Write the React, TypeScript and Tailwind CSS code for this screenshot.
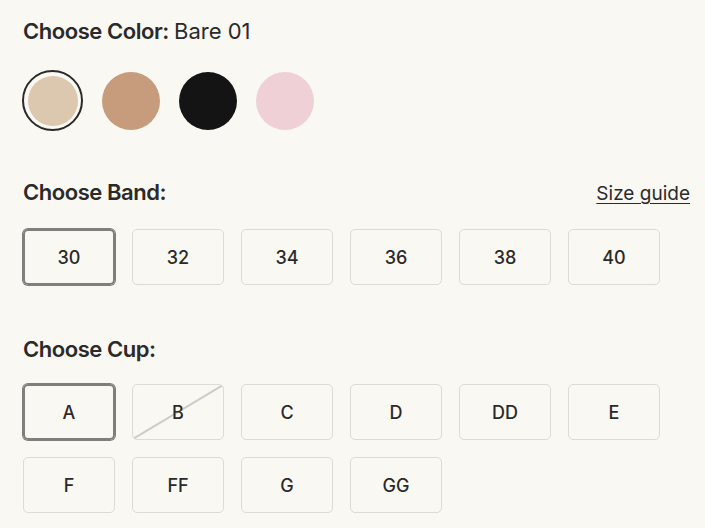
import React from 'react';

const colors = [
  { name: 'Bare 01', hex: '#dcc7af' },
  { name: 'Bare 02', hex: '#c69c7d' },
  { name: 'Black', hex: '#141414' },
  { name: 'Pink', hex: '#efd0d6' },
];

const bands = ['30', '32', '34', '36', '38', '40'];
const cups = ['A', 'B', 'C', 'D', 'DD', 'E', 'F', 'FF', 'G', 'GG'];
const soldOut = ['B'];

const font = { fontFamily: 'Inter, "Liberation Sans", sans-serif' };

function SizeButton({ label, selected, disabled }: { label: string; selected?: boolean; disabled?: boolean }) {
  return (
    <button
      className={
        selected
          ? 'relative flex h-[56px] w-[92px] items-center justify-center rounded-[5px] border-2 border-[#7f7f7b] text-[18px] font-medium text-[#2a2a2a] shadow-[0_0_0_1px_#7f7f7b]'
          : 'relative flex h-[56px] w-[92px] items-center justify-center overflow-hidden rounded-[5px] border border-[#dedbd3] text-[18px] font-medium text-[#2a2a2a]'
      }
    >
      {disabled && (
        <svg className="absolute inset-0 h-full w-full" viewBox="0 0 92 56" preserveAspectRatio="none">
          <line x1="0" y1="56" x2="92" y2="0" stroke="#cfccc6" strokeWidth="2" />
        </svg>
      )}
      <span className="relative">{label}</span>
    </button>
  );
}

export default function App() {
  return (
    <div className="min-h-screen bg-[#faf8f2] pl-[23px] pr-[15px] pt-[15px] text-[#2a2a2a]" style={font}>
      <h2 className="text-[22px] font-semibold tracking-[-0.02em]">
        Choose Color: <span className="font-normal tracking-normal">Bare 01</span>
      </h2>
      <div className="mt-[22px] flex items-center gap-[19px]">
        {colors.map((c, i) => (
          <button
            key={c.name}
            className={
              i === 0
                ? '-ml-px flex h-[61px] w-[61px] items-center justify-center rounded-full border-2 border-[#2a2a2a]'
                : 'flex h-[58px] w-[58px] items-center justify-center rounded-full'
            }
          >
            <span
              className={i === 0 ? 'block h-[50px] w-[50px] rounded-full' : 'block h-[58px] w-[58px] rounded-full'}
              style={{ backgroundColor: c.hex }}
            />
          </button>
        ))}
      </div>

      <div className="mt-[45px] flex items-baseline justify-between">
        <h2 className="text-[22px] font-semibold tracking-[-0.02em]">Choose Band:</h2>
        <a href="#" className="text-[19px] underline underline-offset-[3px]">Size guide</a>
      </div>
      <div className="mt-[20px] flex gap-[17px]">
        {bands.map((b, i) => (
          <SizeButton key={b} label={b} selected={i === 0} />
        ))}
      </div>

      <h2 className="mt-[48px] text-[22px] font-semibold tracking-[-0.02em]">Choose Cup:</h2>
      <div className="mt-[18px] grid w-[640px] grid-cols-[repeat(6,92px)] gap-x-[17px] gap-y-[17px]">
        {cups.map((c, i) => (
          <SizeButton key={c} label={c} selected={i === 0} disabled={soldOut.includes(c)} />
        ))}
      </div>
    </div>
  );
}
